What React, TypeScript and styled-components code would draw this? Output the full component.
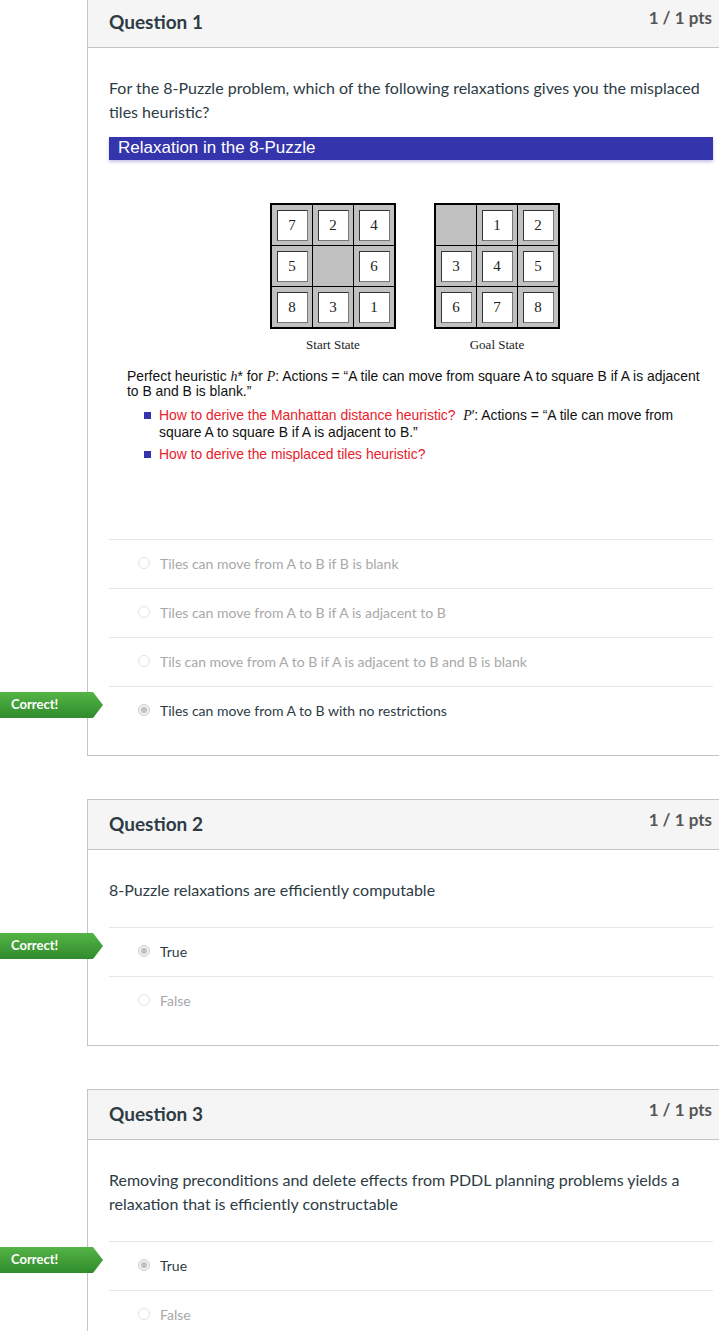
import React from "react";
import styled, { createGlobalStyle } from "styled-components";

const Global = createGlobalStyle`
  html, body { margin: 0; padding: 0; background: #fff; overflow-x: hidden; }
  body { font-family: Lato, "Noto Sans", sans-serif; color: #2d3b45; }
`;

const Page = styled.div`
  padding-left: 87px;
  margin-top: -3px;
  width: 735px;
`;

const Card = styled.section`
  width: 648px;
  box-sizing: border-box;
  border: 1px solid #c4c4c4;
  margin-bottom: 43px;
  background: #fff;
`;

const Header = styled.header`
  height: 49px;
  background: #f5f5f5;
  border-bottom: 1px solid #c4c4c4;
  display: flex;
  justify-content: space-between;
  align-items: flex-start;
  padding: 0 22px 0 21px;
`;

const Title = styled.h2`
  margin: 0;
  font-family: Lato, sans-serif;
  font-weight: 700;
  font-size: 19px;
  line-height: 48px;
  color: #2d3b45;
`;

const Points = styled.div`
  font-family: Lato, sans-serif;
  font-weight: 700;
  font-size: 17px;
  line-height: 20px;
  padding-top: 10px;
  color: #555;
`;

const Body = styled.div`
  padding: 28px 21px 20px 21px;
`;

const Text = styled.p<{ $mb: number }>`
  margin: 0 0 ${(p) => p.$mb}px 0;
  font-size: 16px;
  line-height: 24px;
  color: #2d3b45;
  font-family: Lato, sans-serif;
`;

const Answers = styled.div`
  display: flex;
  flex-direction: column;
`;

const Row = styled.div<{ $selected?: boolean }>`
  position: relative;
  height: 48px;
  box-sizing: content-box;
  border-top: 1px solid #e6e6e6;
  display: flex;
  align-items: center;
  padding-left: 29px;
  gap: 10px;
  font-size: 14px;
  font-family: Lato, sans-serif;
  color: ${(p) => (p.$selected ? "#2d3b45" : "#a8a8a8")};
`;

const AnswerText = styled.span`
  margin-bottom: 2px;
`;

const Radio = styled.span<{ $selected?: boolean }>`
  width: 12px;
  height: 12px;
  box-sizing: border-box;
  border-radius: 50%;
  border: 1px solid ${(p) => (p.$selected ? "#cfcfcf" : "#e2e2e2")};
  background: ${(p) => (p.$selected ? "#efefef" : "#fff")};
  display: flex;
  align-items: center;
  justify-content: center;
  margin-bottom: 2px;
  &::after {
    content: "";
    width: 6px;
    height: 6px;
    border-radius: 50%;
    background: ${(p) => (p.$selected ? "#c2c2c2" : "transparent")};
  }
`;

const Badge = styled.div`
  position: absolute;
  left: -109px;
  top: 5px;
  width: 103px;
  height: 26px;
  clip-path: polygon(0 0, 93px 0, 103px 50%, 93px 100%, 0 100%);
  background: linear-gradient(#55b446, #2f8b2c);
  color: #fff;
  font-family: Lato, sans-serif;
  font-weight: 700;
  font-size: 13px;
  line-height: 24px;
  padding-left: 11px;
  box-sizing: border-box;
`;

/* Slide image */
const Slide = styled.div`
  width: 604px;
  height: 377px;
  background: #fff;
  display: flex;
  flex-direction: column;
`;

const SlideTitle = styled.div`
  height: 23px;
  background: #3434ac;
  box-shadow: 0 2px 3px rgba(60, 60, 170, 0.3);
  color: #fff;
  font-family: "Liberation Sans", Arial, sans-serif;
  font-size: 17px;
  line-height: 22px;
  padding-left: 9px;
`;

const Boards = styled.div`
  display: flex;
  justify-content: center;
  gap: 38px;
  margin-top: 43px;
  padding-left: 8px;
`;

const BoardCol = styled.div`
  display: flex;
  flex-direction: column;
  align-items: center;
`;

const Board = styled.div`
  display: grid;
  grid-template-columns: repeat(3, 40px);
  grid-template-rows: repeat(3, 40px);
  gap: 1px;
  background: #000;
  border: 2px solid #000;
`;

const Cell = styled.div`
  background: #c0c0c0;
  display: flex;
  align-items: center;
  justify-content: center;
`;

const Tile = styled.div`
  width: 31px;
  height: 31px;
  box-sizing: border-box;
  background: #fff;
  border: 1px solid;
  border-color: #333 #777 #777 #333;
  display: flex;
  align-items: center;
  justify-content: center;
  font-family: "Liberation Serif", "Times New Roman", serif;
  font-size: 15px;
  color: #222;
`;

const Caption = styled.div`
  margin-top: 8px;
  font-family: "Liberation Serif", "Times New Roman", serif;
  font-size: 13px;
  line-height: 15px;
  color: #222;
`;

const SlideText = styled.div`
  margin-top: 17px;
  padding-left: 18px;
  font-family: "Liberation Sans", Arial, sans-serif;
  font-size: 13.9px;
  line-height: 15px;
  color: #111;
  white-space: nowrap;
`;

const Math = styled.i`
  font-family: "Liberation Serif", "Times New Roman", serif;
`;

const Bullets = styled.ul`
  list-style: none;
  margin: 8px 0 0 17px;
  padding: 0;
  display: flex;
  flex-direction: column;
  gap: 6px;
`;

const Bullet = styled.li`
  display: flex;
  gap: 8px;
  line-height: 16px;
  &::before {
    content: "";
    flex: none;
    width: 7px;
    height: 7px;
    margin-top: 5px;
    background: #3434ac;
  }
`;

const Red = styled.span`
  color: #e8212b;
`;

const start = ["7", "2", "4", "5", "", "6", "8", "3", "1"];
const goal = ["", "1", "2", "3", "4", "5", "6", "7", "8"];

const PuzzleBoard = ({ tiles, label }: { tiles: string[]; label: string }) => (
  <BoardCol>
    <Board>
      {tiles.map((t, i) => (
        <Cell key={i}>{t && <Tile>{t}</Tile>}</Cell>
      ))}
    </Board>
    <Caption>{label}</Caption>
  </BoardCol>
);

type Answer = { text: string; selected?: boolean };

const AnswerList = ({ items }: { items: Answer[] }) => (
  <Answers>
    {items.map((a, i) => (
      <Row key={i} $selected={a.selected}>
        {a.selected && <Badge>Correct!</Badge>}
        <Radio $selected={a.selected} />
        <AnswerText>{a.text}</AnswerText>
      </Row>
    ))}
  </Answers>
);

const QuestionHeader = ({ n }: { n: number }) => (
  <Header>
    <Title>Question {n}</Title>
    <Points>1 / 1 pts</Points>
  </Header>
);

export default function App() {
  return (
    <>
      <Global />
      <Page>
        <Card>
          <QuestionHeader n={1} />
          <Body>
            <Text $mb={13}>
              For the 8-Puzzle problem, which of the following relaxations gives you the misplaced tiles heuristic?
            </Text>
            <Slide>
              <SlideTitle>Relaxation in the 8-Puzzle</SlideTitle>
              <Boards>
                <PuzzleBoard tiles={start} label="Start State" />
                <PuzzleBoard tiles={goal} label="Goal State" />
              </Boards>
              <SlideText>
                Perfect heuristic <Math>h</Math>* for <Math>P</Math>: Actions = “A tile can move from square A to square B if A is adjacent
                <br />
                to B and B is blank.”
                <Bullets>
                  <Bullet>
                    <span>
                      <Red>How to derive the Manhattan distance heuristic?</Red>&nbsp;&nbsp;<Math>P</Math>′: Actions = “A tile can move from
                      <br />
                      square A to square B if A is adjacent to B.”
                    </span>
                  </Bullet>
                  <Bullet>
                    <Red>How to derive the misplaced tiles heuristic?</Red>
                  </Bullet>
                </Bullets>
              </SlideText>
            </Slide>
            <div style={{ height: 25 }} />
            <AnswerList
              items={[
                { text: "Tiles can move from A to B if B is blank" },
                { text: "Tiles can move from A to B if A is adjacent to B" },
                { text: "Tils can move from A to B if A is adjacent to B and B is blank" },
                { text: "Tiles can move from A to B with no restrictions", selected: true },
              ]}
            />
          </Body>
        </Card>

        <Card>
          <QuestionHeader n={2} />
          <Body>
            <Text $mb={25}>8-Puzzle relaxations are efficiently computable</Text>
            <AnswerList items={[{ text: "True", selected: true }, { text: "False" }]} />
          </Body>
        </Card>

        <Card>
          <QuestionHeader n={3} />
          <Body>
            <Text $mb={25}>
              Removing preconditions and delete effects from PDDL planning problems yields a relaxation that is efficiently constructable
            </Text>
            <AnswerList items={[{ text: "True", selected: true }, { text: "False" }]} />
          </Body>
        </Card>
      </Page>
    </>
  );
}
